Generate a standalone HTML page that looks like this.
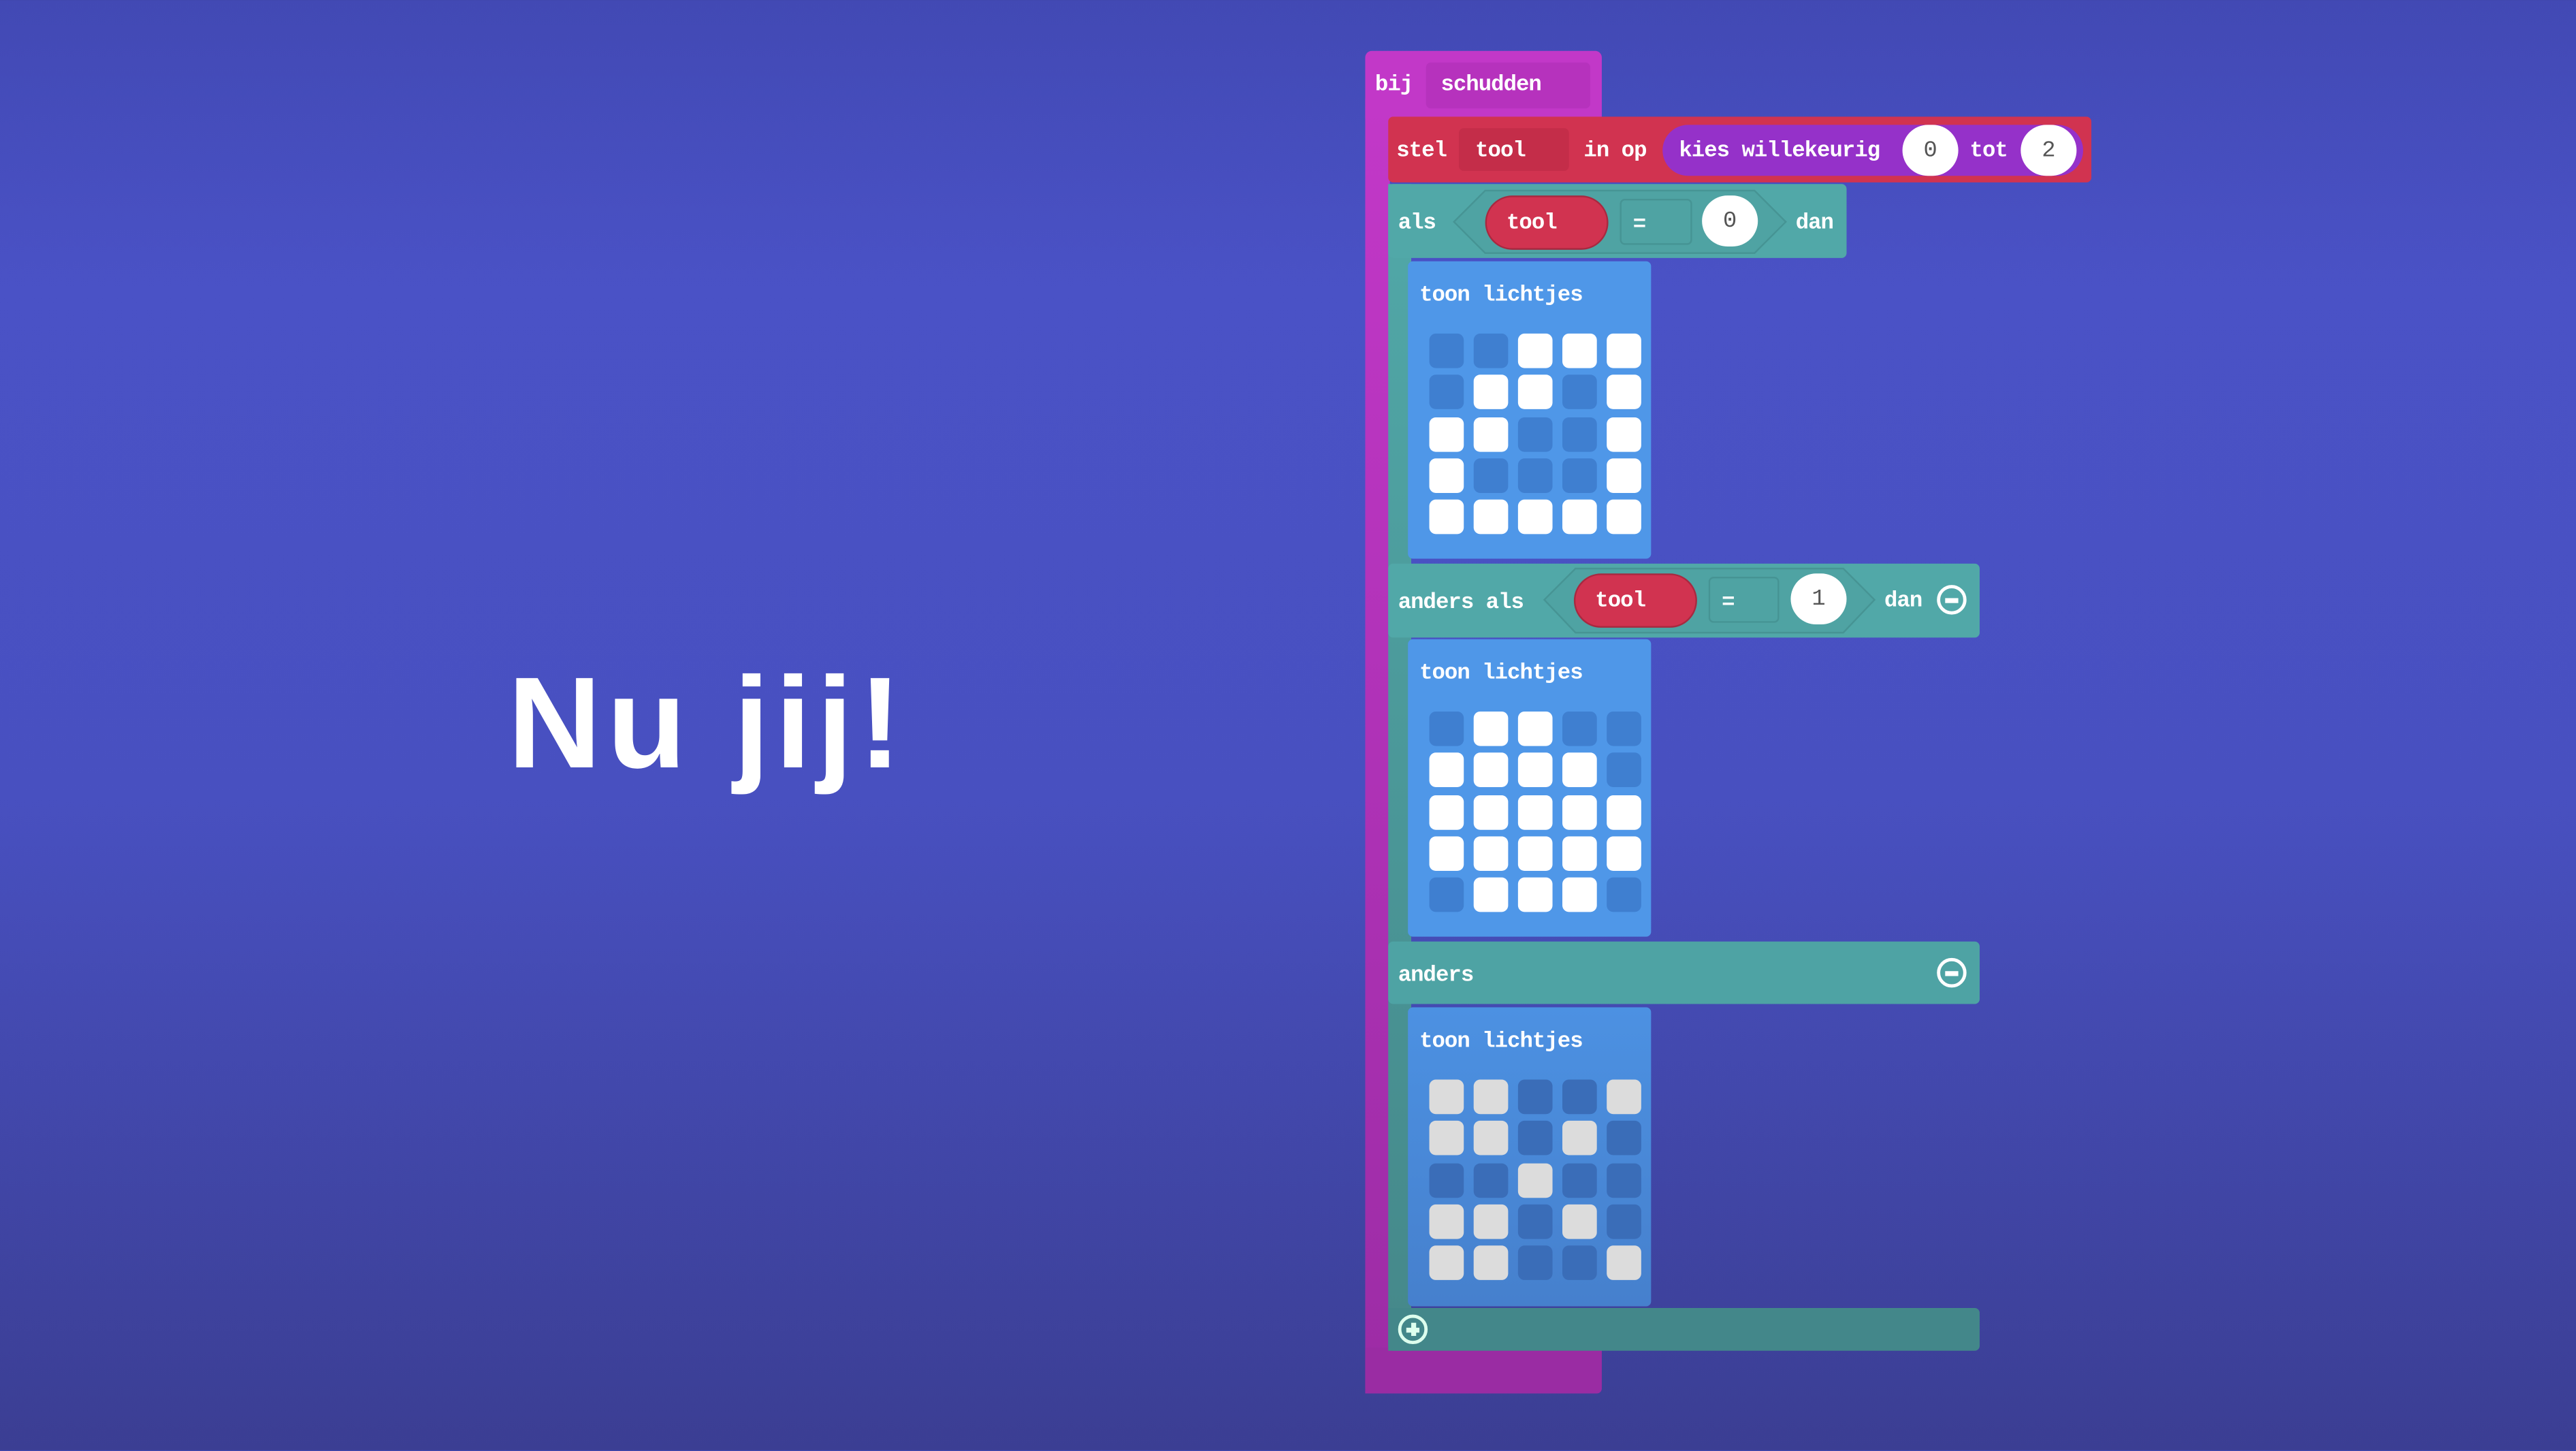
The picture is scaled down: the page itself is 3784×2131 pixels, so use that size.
<!DOCTYPE html>
<html><head><meta charset="utf-8"><style>
html,body{margin:0;padding:0;width:3784px;height:2130px;overflow:hidden}
body{background:linear-gradient(180deg,#4249b4 0%,#4a52c6 20%,#4850c0 55%,#3b3e93 100%)}
#s{position:absolute;left:0;top:0;width:1568px;height:883px;transform:scale(2.41327);transform-origin:0 0}
#s div{position:absolute;box-sizing:border-box}
.t{font-family:"Liberation Mono","DejaVu Sans Mono",monospace;font-size:13.4px;letter-spacing:-0.4px;color:#fff;font-weight:bold;line-height:1;white-space:nowrap;margin-top:2px}
.grid{display:grid;grid-template-columns:repeat(5,21px);grid-auto-rows:21px;column-gap:6px;row-gap:4.3px}
.grid span{border-radius:4px;background:#3f7fd0}
.grid span.o{background:#fff}
.g3 span{background:#3a6db8}.g3 span.o{background:#dcdcdc}
.oval{border-radius:17px;background:#fff;color:#555;font-family:"Liberation Mono",monospace;font-size:14px;text-align:center;line-height:33px}
.circ{width:18px;height:18px;border:2px solid #fff;border-radius:50%}
</style></head><body><div id="s">

<div style="left:309px;top:400px;font-family:'Liberation Sans',sans-serif;font-weight:bold;font-size:79px;color:#fff;letter-spacing:3.4px;line-height:1">Nu jij!</div>

<!-- hat block -->
<div style="left:831px;top:31px;width:144px;height:41px;background:#c238c8;border-radius:4px 4px 0 0"></div>
<div style="left:831px;top:60px;width:15px;height:788px;background:linear-gradient(#c238c8,#9c2ca5)"></div>
<div style="left:831px;top:820px;width:144px;height:28px;background:#9a2ca3;border-radius:0 0 3px 3px"></div>
<div class="t" style="left:837px;top:44px">bij</div>
<div style="left:868px;top:38px;width:100px;height:28px;background:#b632bd;border-radius:3px"></div>
<div class="t" style="left:877px;top:44px">schudden</div>

<!-- stel -->
<div style="left:845px;top:71px;width:428px;height:40px;background:#d13350;border-radius:3px"></div>
<div class="t" style="left:850px;top:84px">stel</div>
<div style="left:888px;top:78px;width:67px;height:26px;background:#c42d49;border-radius:3px"></div>
<div class="t" style="left:898px;top:84px">tool</div>
<div class="t" style="left:964px;top:84px">in op</div>
<div style="left:1012px;top:76px;width:256px;height:31px;background:#9531c9;border-radius:16px"></div>
<div class="t" style="left:1022px;top:84px">kies willekeurig</div>
<div class="oval" style="left:1158px;top:76px;width:34px;height:31px">0</div>
<div class="t" style="left:1199px;top:84px">tot</div>
<div class="oval" style="left:1230px;top:76px;width:34px;height:31px">2</div>

<!-- teal spine -->
<div style="left:845px;top:112px;width:14px;height:710px;background:linear-gradient(#51a8a8,#45888a)"></div>

<!-- als -->
<div style="left:845px;top:112px;width:279px;height:45px;background:#51a8a8;border-radius:3px"></div>
<div class="t" style="left:851px;top:128px">als</div>
<svg style="position:absolute;left:884px;top:115px" width="204" height="40"><polygon points="20,1 184,1 203,20 184,39 20,39 1,20" fill="#4fa3a3" stroke="#469494"/></svg>
<div style="left:904px;top:119px;width:75px;height:33px;background:#d13350;border-radius:17px;border:1px solid #a82940"></div>
<div class="t" style="left:917px;top:128px">tool</div>
<div style="left:986px;top:121px;width:44px;height:28px;border:1px solid #469494;border-radius:3px"></div>
<div class="t" style="left:994px;top:129px">=</div>
<div class="oval" style="left:1036px;top:119px;width:34px;height:31px">0</div>
<div class="t" style="left:1093px;top:128px">dan</div>

<!-- toon 1 -->
<div style="left:857px;top:159px;width:148px;height:181px;background:#4f97e8;border-radius:3px"></div>
<div class="t" style="left:864px;top:172px">toon lichtjes</div>
<div class="grid" style="left:870px;top:203px">
<span></span><span></span><span class="o"></span><span class="o"></span><span class="o"></span>
<span></span><span class="o"></span><span class="o"></span><span></span><span class="o"></span>
<span class="o"></span><span class="o"></span><span></span><span></span><span class="o"></span>
<span class="o"></span><span></span><span></span><span></span><span class="o"></span>
<span class="o"></span><span class="o"></span><span class="o"></span><span class="o"></span><span class="o"></span>
</div>

<!-- anders als -->
<div style="left:845px;top:343px;width:360px;height:45px;background:#51a8a8;border-radius:3px"></div>
<div class="t" style="left:851px;top:359px">anders als</div>
<svg style="position:absolute;left:939px;top:345px" width="203" height="41"><polygon points="20,1 183,1 202,20 183,40 20,40 1,20" fill="#4fa3a3" stroke="#469494"/></svg>
<div style="left:958px;top:349px;width:75px;height:33px;background:#d13350;border-radius:17px;border:1px solid #a82940"></div>
<div class="t" style="left:971px;top:358px">tool</div>
<div style="left:1040px;top:351px;width:43px;height:28px;border:1px solid #469494;border-radius:3px"></div>
<div class="t" style="left:1048px;top:359px">=</div>
<div class="oval" style="left:1090px;top:349px;width:34px;height:31px">1</div>
<div class="t" style="left:1147px;top:358px">dan</div>
<div class="circ" style="left:1179px;top:356px"><div style="left:3px;top:6px;width:8px;height:3px;background:#fff"></div></div>

<!-- toon 2 -->
<div style="left:857px;top:389px;width:148px;height:181px;background:#4f97e8;border-radius:3px"></div>
<div class="t" style="left:864px;top:402px">toon lichtjes</div>
<div class="grid" style="left:870px;top:433px">
<span></span><span class="o"></span><span class="o"></span><span></span><span></span>
<span class="o"></span><span class="o"></span><span class="o"></span><span class="o"></span><span></span>
<span class="o"></span><span class="o"></span><span class="o"></span><span class="o"></span><span class="o"></span>
<span class="o"></span><span class="o"></span><span class="o"></span><span class="o"></span><span class="o"></span>
<span></span><span class="o"></span><span class="o"></span><span class="o"></span><span></span>
</div>

<!-- anders -->
<div style="left:845px;top:573px;width:360px;height:38px;background:#4ea3a4;border-radius:3px"></div>
<div class="t" style="left:851px;top:586px">anders</div>
<div class="circ" style="left:1179px;top:583px"><div style="left:3px;top:6px;width:8px;height:3px;background:#fff"></div></div>

<!-- toon 3 -->
<div style="left:857px;top:613px;width:148px;height:182px;background:linear-gradient(#4c91e2,#4680cd);border-radius:3px"></div>
<div class="t" style="left:864px;top:626px">toon lichtjes</div>
<div class="grid g3" style="left:870px;top:657px">
<span class="o"></span><span class="o"></span><span></span><span></span><span class="o"></span>
<span class="o"></span><span class="o"></span><span></span><span class="o"></span><span></span>
<span></span><span></span><span class="o"></span><span></span><span></span>
<span class="o"></span><span class="o"></span><span></span><span class="o"></span><span></span>
<span class="o"></span><span class="o"></span><span></span><span></span><span class="o"></span>
</div>

<!-- bottom bar -->
<div style="left:845px;top:796px;width:360px;height:26px;background:#43878a;border-radius:0 3px 3px 3px"></div>
<div class="circ" style="left:851px;top:800px;border-color:#dfe"><div style="left:3px;top:5.5px;width:8px;height:3px;background:#dfe"></div><div style="left:5.5px;top:3px;width:3px;height:8px;background:#dfe"></div></div>

</div></body></html>
